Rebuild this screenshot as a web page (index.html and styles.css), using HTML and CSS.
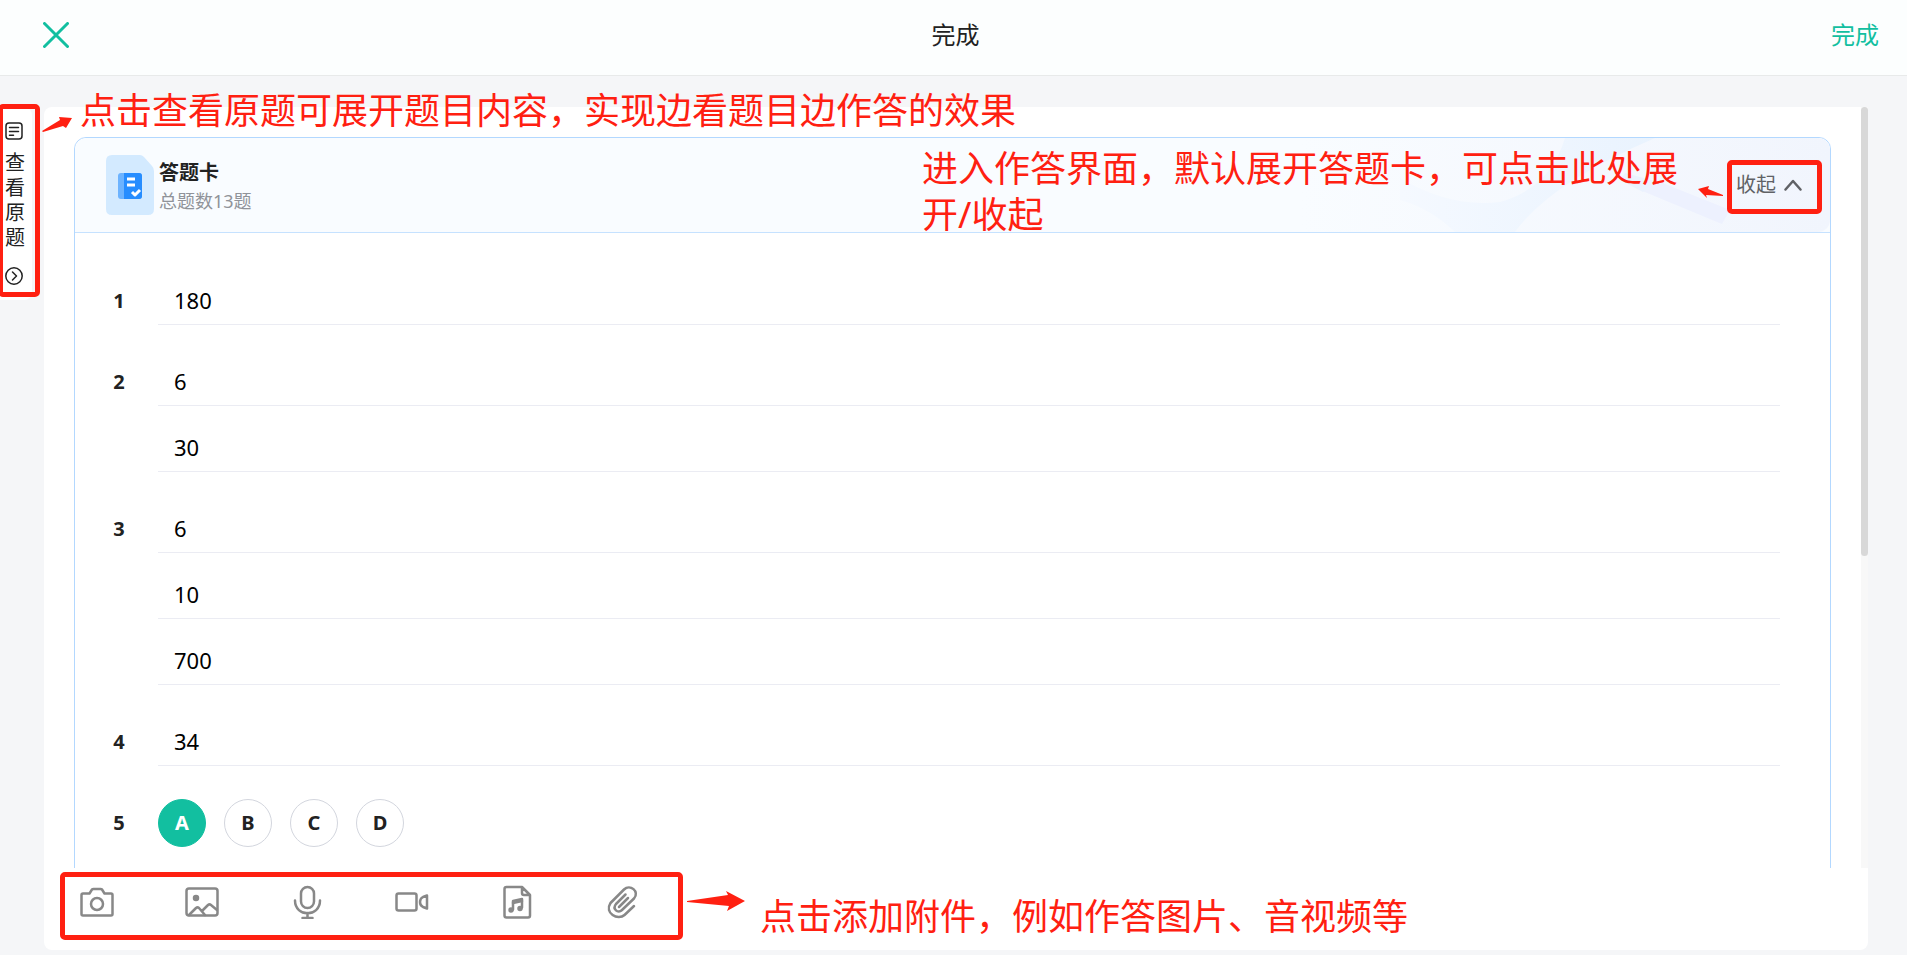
FILE: index.html
```html
<!DOCTYPE html>
<html lang="zh-CN">
<head>
    <meta charset="UTF-8">
    <meta name="viewport" content="width=device-width, initial-scale=1.0">
    <title>完成</title>
    <link rel="stylesheet" href="styles.css">
</head>
<body>
    <header class="topbar">
        <button class="close-btn" type="button" aria-label="关闭">
            <svg width="26" height="26" viewBox="0 0 26 26"><path d="M1.5 1.5l23 23M24.5 1.5l-23 23"/></svg>
        </button>
        <h1>完成</h1>
        <button class="done-btn" type="button">完成</button>
    </header>

    <main class="page">
        <!-- 查看原题 -->
        <button class="side-tab" type="button">
            <svg width="18" height="18" viewBox="0 0 18 18"><rect x="1" y="1" width="16" height="16" rx="3"/><path d="M4.5 5.5h9M4.5 9.5h9M4.5 13.3h4"/></svg>
            <span>查看原题</span>
            <svg width="18" height="18" viewBox="0 0 18 18"><circle cx="9" cy="9" r="8.2"/><path d="M7.5 5l4 4-4 4"/></svg>
        </button>
        <div class="mark mark-side"></div>
        <svg class="arrow arrow-side" width="32" height="18" viewBox="0 0 32 18"><path d="M0 15L18 4l-1-3 13 1-6 10-3-2L1 16z"/></svg>
        <p class="note note-side">点击查看原题可展开题目内容，实现边看题目边作答的效果</p>

        <section class="sheet">
            <div class="scroll-area">
                <div class="scroll-content">
                    <div class="card">
                        <div class="card-head">
                            <svg class="head-bg" width="530" height="94" viewBox="0 0 530 94" preserveAspectRatio="none">
                                <defs>
                                    <linearGradient id="bg1" x1="0" x2="1"><stop offset="0" stop-color="#f9fcff"/><stop offset="1" stop-color="#f1f5fd"/></linearGradient>
                                    <linearGradient id="bg2" x1="0" x2="1"><stop offset="0" stop-color="#f5f9ff"/><stop offset="1" stop-color="#e9f3fe"/></linearGradient>
                                </defs>
                                <path fill="url(#bg1)" d="M0 0h530v94H0z"/>
                                <path fill="url(#bg2)" d="M100 40Q150 70 200 64Q250 50 265 0L355 0Q250 45 215 94H155Q130 70 100 62z"/>
                                <path fill="#edf1fe" d="M355 42l75 30-8 14-82-34z"/>
                                <path fill="#eaf2fe" d="M325 35l30 8-12 11-23-12z"/>
                            </svg>
                            <svg class="doc-icon" width="48" height="60" viewBox="0 0 48 60">
                                <path fill="#d3eaff" d="M6 0h28q2 0 4 2l8 9q2 2 2 5v38q0 6-6 6H6q-6 0-6-6V6q0-6 6-6z"/>
                                <rect x="12" y="18" width="24" height="26" rx="3" fill="#6cb3ff"/>
                                <path fill="#268dff" d="M18 18h15q3 0 3 3v20q0 3-3 3H18z"/>
                                <path fill="none" stroke="#fff" stroke-width="3" d="M21 24h8M21 30h8M26 37l3 3 5-5"/>
                            </svg>
                            <div class="head-text">
                                <h2>答题卡</h2>
                                <p>总题数13题</p>
                            </div>
                            <button class="fold-btn" type="button">
                                收起
                                <svg width="18" height="12" viewBox="0 0 18 12"><path d="M1.5 10.5L9 2l7.500 8.500"/></svg>
                            </button>
                            <div class="mark mark-fold"></div>
                            <svg class="arrow arrow-fold" width="26" height="12" viewBox="0 0 26 12"><path d="M0 3L11 0 10 3 25 9v1L8 9l1 3z"/></svg>
                            <p class="note note-fold">进入作答界面，默认展开答题卡，可点击此处展开/收起</p>
                        </div>

                        <ol class="questions">
                            <li>
                                <span class="num">1</span>
                                <div class="answers"><input type="text" value="180" aria-label="第1题"></div>
                            </li>
                            <li>
                                <span class="num">2</span>
                                <div class="answers">
                                    <input type="text" value="6" aria-label="第2题 第1空">
                                    <input type="text" value="30" aria-label="第2题 第2空">
                                </div>
                            </li>
                            <li>
                                <span class="num">3</span>
                                <div class="answers">
                                    <input type="text" value="6" aria-label="第3题 第1空">
                                    <input type="text" value="10" aria-label="第3题 第2空">
                                    <input type="text" value="700" aria-label="第3题 第3空">
                                </div>
                            </li>
                            <li>
                                <span class="num">4</span>
                                <div class="answers"><input type="text" value="34" aria-label="第4题"></div>
                            </li>
                            <li>
                                <span class="num">5</span>
                                <div class="options">
                                    <label><input type="radio" name="q5" value="A" checked><span>A</span></label>
                                    <label><input type="radio" name="q5" value="B"><span>B</span></label>
                                    <label><input type="radio" name="q5" value="C"><span>C</span></label>
                                    <label><input type="radio" name="q5" value="D"><span>D</span></label>
                                </div>
                            </li>
                        </ol>
                    </div>
                </div>
                <div class="scrollbar"><div class="thumb"></div></div>
            </div>

            <!-- 附件工具栏 -->
            <div class="toolbar">
                <button type="button" aria-label="拍照">
                    <svg width="34" height="34" viewBox="0 0 34 34"><path d="M3 8.500h6.500l2.500-4q.5-.5 1.500-.5h7q1 0 1.500.5l2.500 4H31q1.500 0 1.500 1.500v19q0 1.500-1.500 1.500H3q-1.500 0-1.500-1.500V10q0-1.500 1.500-1.500z"/><circle cx="17" cy="19" r="6"/></svg>
                </button>
                <button type="button" aria-label="图片">
                    <svg width="34" height="34" viewBox="0 0 34 34"><rect x="1.500" y="3.500" width="31" height="27" rx="2.500"/><circle class="solid" cx="11" cy="13" r="2"/><path d="M4 30l7-7q1.500-1.200 3 0l6 7M17 26l6-6q1.500-1.200 3 0l6 5"/></svg>
                </button>
                <button type="button" aria-label="录音">
                    <svg width="34" height="34" viewBox="0 0 34 34"><rect x="11" y="2" width="13" height="21" rx="6.500"/><path d="M5 15.500c0 17 25 17 25 0M17.500 28v5M12.500 33h10"/></svg>
                </button>
                <button type="button" aria-label="视频">
                    <svg width="34" height="34" viewBox="0 0 34 34"><rect x="1.500" y="8.500" width="20" height="17" rx="2"/><path d="M32 10.500l-4 1.500q-3 1.500-3 5t3 5l4 1.500z"/></svg>
                </button>
                <button type="button" aria-label="音频">
                    <svg width="34" height="34" viewBox="0 0 34 34"><path d="M6.500 2H22l8 8v20.500q0 2-2 2H6.500q-2 0-2-2V4q0-2 2-2zM22 2v6q0 2 2 2h6M13 24.500V16l9-2v8.500"/><path d="M13 18l9-2"/><circle class="solid" cx="11" cy="25" r="1.500"/><circle class="solid" cx="20" cy="23.500" r="1.500"/></svg>
                </button>
                <button type="button" aria-label="附件">
                    <svg width="34" height="34" viewBox="0 0 34 34"><path d="M29 21L19.500 30C13 36 -1 28 5.500 18L19 4.500c6-6 16 2 10 9L17 25c-4 4-10-1-6-6l9.500-9.500M23 13l-9 9"/></svg>
                </button>
                <div class="mark mark-tools"></div>
                <svg class="arrow arrow-tools" width="58" height="20" viewBox="0 0 58 20"><path d="M0 10l41-6-2-4 19 10-18 10 2-5L0 11z"/></svg>
                <p class="note note-tools">点击添加附件，例如作答图片、音视频等</p>
            </div>
        </section>
    </main>
</body>
</html>
```
FILE: styles.css
```css
* {
    box-sizing: border-box;
}
body {
    margin: 0;
    height: 100vh;
    display: flex;
    flex-direction: column;
    background-color: #f5f6f8;
    color: #222;
    font-family: "Noto Sans", "Noto Sans CJK SC", sans-serif;
    overflow: hidden;
}
h1, h2, p, ol {
    margin: 0;
    padding: 0;
    font-weight: normal;
}
button {
    padding: 0;
    border: none;
    background: none;
    font-family: inherit;
    cursor: pointer;
}
svg {
    display: block;
    fill: none;
    stroke-linecap: round;
    stroke-linejoin: round;
}

/* 顶部 */
.topbar {
    display: grid;
    grid-template-columns: 1fr auto 1fr;
    align-items: center;
    flex: none;
    height: 76px;
    padding: 0 28px 5px 32px;
    background-color: #fcfefe;
    border-bottom: 1px solid #e8eaea;
}
.topbar h1 {
    font-size: 24px;
    line-height: 36px;
}
.close-btn {
    justify-self: start;
    margin-left: 11px;
}
.close-btn svg {
    stroke: #12bfa0;
    stroke-width: 3;
}
.done-btn {
    justify-self: end;
    font-size: 24px;
    line-height: 36px;
    color: #12bfa0;
}

.page {
    position: relative;
    flex: 1;
    min-height: 0;
    display: flex;
    padding: 31px 39px 5px 44px;
}

/* 左侧标签 */
.side-tab {
    position: absolute;
    left: 0;
    top: 31px;
    width: 32px;
    height: 193px;
    padding: 14px 5px;
    background-color: #fff;
    border-radius: 0 8px 8px 0;
    color: #222;
}
.side-tab span {
    display: block;
    width: 20px;
    margin: 10px 0 17px;
    font-size: 20px;
    line-height: 25px;
    word-break: break-all;
}
.side-tab svg {
    stroke: #222;
    stroke-width: 1.5;
}

.sheet {
    flex: 1;
    min-width: 0;
    display: flex;
    flex-direction: column;
    background-color: #fff;
    border-radius: 8px;
}
.scroll-area {
    flex: 1;
    min-height: 0;
    display: flex;
}
.scroll-content {
    flex: 1;
    min-width: 0;
    padding: 30px 30px 0;
    overflow-y: auto;
    scrollbar-width: none;
}
.scrollbar {
    width: 7px;
    background-color: #f8f8f8;
}
.thumb {
    height: 59%;
    border-radius: 4px;
    background-color: #d8d8d8;
}

/* 答题卡 */
.card {
    border: 1px solid #b3d8ff;
    border-radius: 12px;
}
.card-head {
    position: relative;
    display: flex;
    align-items: center;
    height: 95px;
    padding: 0 28px 0 31px;
    background-color: #f9fcff;
    border-bottom: 1px solid #c6e2ff;
    border-radius: 12px 12px 0 0;
}
.head-bg {
    position: absolute;
    top: 0;
    right: 0;
    border-radius: 0 12px 12px 0;
}
.doc-icon {
    position: relative;
    stroke-linecap: butt;
}
.head-text {
    flex: 1;
    margin-left: 5px;
    padding-top: 3px;
}
.head-text h2 {
    font-size: 20px;
    font-weight: bold;
    line-height: 28px;
}
.head-text p {
    font-size: 18px;
    line-height: 28px;
    color: #909399;
}
.fold-btn {
    position: relative;
    display: flex;
    align-items: center;
    gap: 8px;
    font-size: 20px;
    line-height: 30px;
    color: #606266;
}
.fold-btn svg {
    stroke: #606266;
    stroke-width: 2.5;
}

.questions {
    display: flex;
    flex-direction: column;
    gap: 33px;
    padding: 44px 50px 440px 31px;
    list-style: none;
}
.questions li {
    display: flex;
    gap: 26px;
}
.num {
    width: 26px;
    font-size: 20px;
    font-weight: bold;
    line-height: 48px;
    text-align: center;
}
.answers {
    flex: 1;
    display: flex;
    flex-direction: column;
    gap: 18px;
}
.answers input {
    width: 100%;
    height: 48px;
    padding: 0 16px 2px;
    border: none;
    border-bottom: 1px solid #ebecf3;
    background: none;
    outline: none;
    font-family: inherit;
    font-size: 22px;
    color: #000;
}
.options {
    display: flex;
    gap: 18px;
}
.options label {
    position: relative;
    cursor: pointer;
}
.options input {
    position: absolute;
    opacity: 0;
}
.options span {
    display: block;
    width: 48px;
    height: 48px;
    border: 1px solid #d3d6de;
    border-radius: 50%;
    font-size: 20px;
    font-weight: bold;
    line-height: 46px;
    text-align: center;
}
.options input:checked + span {
    border-color: #12bfa0;
    background-color: #12bfa0;
    color: #fff;
}

/* 工具栏 */
.toolbar {
    position: relative;
    display: flex;
    gap: 71px;
    height: 82px;
    padding: 17px 36px;
}
.toolbar button {
    height: 34px;
}
.toolbar svg {
    stroke: #888;
    stroke-width: 2.5;
}
.toolbar .solid {
    fill: #888;
}

/* 红色标注 */
.mark {
    position: absolute;
    border: 5px solid #ff2011;
    border-radius: 5px;
    pointer-events: none;
}
.mark-side {
    left: -2px;
    top: 28px;
    width: 42px;
    height: 193px;
}
.mark-fold {
    right: 8px;
    top: 22px;
    width: 95px;
    height: 54px;
}
.mark-tools {
    left: 16px;
    top: 4px;
    width: 623px;
    height: 68px;
}
.note {
    position: absolute;
    font-size: 36px;
    line-height: 46px;
    color: #ff2011;
}
.note-side {
    left: 80px;
    top: 12px;
}
.note-fold {
    right: 148px;
    top: 8px;
    width: 760px;
}
.note-tools {
    left: 716px;
    top: 26px;
}
.toolbar .arrow,
.arrow {
    position: absolute;
    fill: #ff2011;
    stroke: none;
}
.arrow-side {
    left: 42px;
    top: 40px;
}
.arrow-fold {
    right: 106px;
    top: 48px;
}
.arrow-tools {
    left: 643px;
    top: 23px;
}
```
